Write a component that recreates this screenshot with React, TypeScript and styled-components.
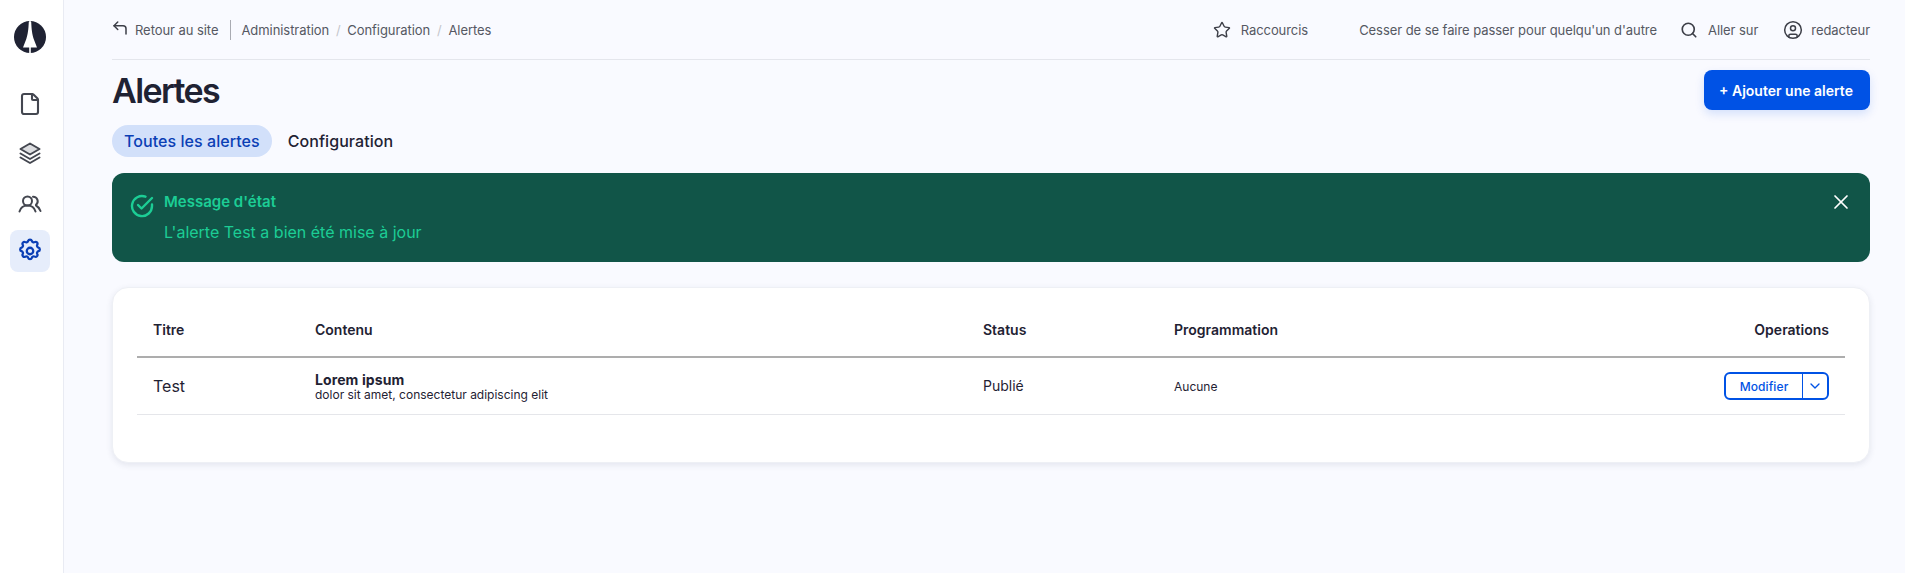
import React from 'react'
import styled, { createGlobalStyle } from 'styled-components'
import { ChevronDown, CornerUpLeft, File, Search, Star, UserCircle, X } from 'lucide-react'

const GlobalStyle = createGlobalStyle`
  html, body {
    margin: 0;
    padding: 0;
    height: 100%;
    background: #f9faff;
  }
  body {
    font-family: Inter, "Liberation Sans", sans-serif;
    color: #1f2233;
  }
  * {
    box-sizing: border-box;
  }
`

const Shell = styled.div`
  display: flex;
  min-height: 573px;
`

const Sidebar = styled.nav`
  width: 64px;
  flex-shrink: 0;
  background: #fff;
  border-right: 1px solid #e9ebf3;
  display: flex;
  flex-direction: column;
  align-items: center;
  gap: 7px;
  padding: 21px 3px 0 0;
`

const Logo = styled.svg`
  width: 32px;
  height: 32px;
  margin-bottom: 23px;
`

const NavItem = styled.a<{ $active?: boolean }>`
  width: 40px;
  height: 42px;
  border-radius: 8px;
  display: flex;
  align-items: center;
  justify-content: center;
  color: ${(p) => (p.$active ? '#0b3fb5' : '#444750')};
  background: ${(p) => (p.$active ? '#e6edfb' : 'transparent')};
`

const Main = styled.main`
  flex: 1;
  min-width: 0;
  padding: 0 35px 0 48px;
`

const TopBar = styled.header`
  height: 60px;
  border-bottom: 1px solid #e4e6ec;
  display: flex;
  align-items: center;
  justify-content: space-between;
  font-size: 13px;
  letter-spacing: -0.06px;
  color: #555862;
`

const Crumbs = styled.div`
  display: flex;
  align-items: center;
`

const BackLink = styled.a`
  display: flex;
  align-items: center;
  gap: 6px;
  padding-right: 12px;
  margin-right: 10px;
  margin-left: -1px;
  height: 20px;
  border-right: 1px solid #a9abb2;
  svg {
    margin-top: -3px;
    color: #3d3f48;
  }
`

const Sep = styled.span`
  color: #c4c6cc;
  margin: 0 6.8px;
`

const TopActions = styled.div`
  display: flex;
  align-items: center;
`

const TopAction = styled.a<{ $gap: number; $iconGap?: number }>`
  display: flex;
  align-items: center;
  gap: ${(p) => p.$iconGap ?? 8}px;
  margin-right: ${(p) => p.$gap}px;
  color: #555862;
  svg {
    color: #3d3f48;
  }
`

const TitleRow = styled.div`
  display: flex;
  align-items: flex-start;
  justify-content: space-between;
  padding-top: 11px;
  height: 65px;
`

const Title = styled.h1`
  margin: 0;
  font-size: 34px;
  line-height: 40px;
  font-weight: 600;
  letter-spacing: -1.6px;
  color: #1f2233;
`

const AddButton = styled.button`
  height: 40px;
  margin-top: -1px;
  width: 166px;
  padding: 0 2px 0 0;
  border: 0;
  border-radius: 8px;
  background: #0052e5;
  color: #fff;
  font-family: inherit;
  font-size: 14px;
  font-weight: 600;
  box-shadow: 0 4px 10px rgba(0, 82, 229, 0.15);
`

const Tabs = styled.div`
  display: flex;
  align-items: center;
  gap: 16px;
  margin-bottom: 16px;
`

const Tab = styled.a<{ $active?: boolean }>`
  height: 32px;
  padding: ${(p) => (p.$active ? '0 12px' : '0')};
  border-radius: 16px;
  display: flex;
  align-items: center;
  font-size: 16px;
  font-weight: 500;
  letter-spacing: 0.06px;
  color: ${(p) => (p.$active ? '#0b3fb5' : '#1f2233')};
  background: ${(p) => (p.$active ? '#d2e0fa' : 'transparent')};
`

const Alert = styled.div`
  height: 89px;
  border-radius: 12px;
  background: #115548;
  color: #1ccd95;
  display: flex;
  padding: 20px 17px 20px 18px;
  gap: 10px;
  margin-bottom: 25px;
`

const AlertIcon = styled.svg`
  margin-top: 1px;
  flex-shrink: 0;
`

const AlertBody = styled.div`
  flex: 1;
`

const AlertTitle = styled.div`
  font-size: 15px;
  line-height: 20px;
  font-weight: 600;
  margin-top: -1px;
  margin-bottom: 10px;
`

const AlertText = styled.div`
  font-size: 16px;
  line-height: 20px;
`

const CloseButton = styled.button`
  border: 0;
  background: none;
  padding: 0;
  height: 24px;
  margin-top: -3px;
  color: #fff;
`

const Card = styled.section`
  background: #fff;
  border: 1px solid #eef0f5;
  border-radius: 16px;
  box-shadow: 0 2px 6px rgba(40, 50, 90, 0.1);
  height: 176px;
  padding: 0 24px;
`

const Table = styled.table`
  width: 100%;
  border-collapse: collapse;
  table-layout: fixed;
`

const HeadCell = styled.th<{ $width?: number; $right?: boolean }>`
  height: 69px;
  padding: 15px 16px 0;
  width: ${(p) => (p.$width ? `${p.$width}px` : 'auto')};
  text-align: ${(p) => (p.$right ? 'right' : 'left')};
  font-size: 14px;
  font-weight: 600;
  color: #1f2233;
  border-bottom: 2px solid #adadad;
`

const Cell = styled.td<{ $size?: number; $right?: boolean; $top?: number }>`
  height: 57px;
  padding: ${(p) => p.$top ?? 1}px 16px 0;
  font-size: ${(p) => p.$size ?? 14}px;
  text-align: ${(p) => (p.$right ? 'right' : 'left')};
  border-bottom: 1px solid #e5e6ea;
`

const ContentTitle = styled.div`
  font-size: 14px;
  line-height: 15px;
  font-weight: 700;
  letter-spacing: 0.1px;
  margin-bottom: 1px;
`

const ContentSub = styled.div`
  font-size: 12px;
  line-height: 14px;
`

const SplitButton = styled.div`
  display: inline-flex;
  height: 28px;
  border: 2px solid #0052e5;
  border-radius: 6px;
  color: #0052e5;
  vertical-align: middle;
`

const SplitMain = styled.span`
  width: 77px;
  display: flex;
  align-items: center;
  justify-content: center;
  font-size: 12px;
  font-weight: 500;
  letter-spacing: 0.1px;
  border-right: 1px solid #0052e5;
`

const SplitCaret = styled.span`
  width: 24px;
  display: flex;
  align-items: center;
  justify-content: center;
`

export default function App() {
  return (
    <>
      <GlobalStyle />
      <Shell>
        <Sidebar>
          <Logo viewBox="0 0 32 32">
            <circle cx="16" cy="16" r="16" fill="#1f2233" />
            <path d="M15.200 0h1.600v32h-1.600z" fill="#fff" />
            <path d="M14.800 1h2.400c.4 8 1 12.500 2.500 17l3.300 8.500H9l3.300-8.500c1.500-4.500 2.100-9 2.500-17z" fill="#fff" />
          </Logo>
          <NavItem>
            <File size={24} strokeWidth={2.1} />
          </NavItem>
          <NavItem>
            <svg width="24" height="24" viewBox="0 0 24 24" fill="none" stroke="currentColor" strokeWidth="2" strokeLinejoin="round" strokeLinecap="round">
              <path d="M12 2.500l9.500 5.500L12 13.500 2.500 8z" fill="#dcdde0" />
              <path d="M2.500 12.500L12 18l9.500-5.500" />
              <path d="M2.500 16.500L12 22l9.500-5.500" />
            </svg>
          </NavItem>
          <NavItem>
            <svg width="24" height="24" viewBox="0 0 24 24" fill="none" stroke="currentColor" strokeWidth="2" strokeLinecap="round" strokeLinejoin="round">
              <circle cx="9.500" cy="11" r="4.500" />
              <path d="M1.500 21.500c1-3.500 4-6 8-6s7 2.500 8 6" />
              <path d="M15 6.800a4.500 4.500 0 0 1 3 8" />
              <path d="M18 15.500c2 1 3.500 3 4.500 5.500" />
            </svg>
          </NavItem>
          <NavItem $active>
            <svg width="26" height="26" viewBox="0 0 24 24" fill="none" stroke="currentColor" strokeWidth="2.100" strokeLinejoin="round">
              <path d="M10.300 2.700c.4-1.700 3-1.700 3.400 0a1.800 1.800 0 0 0 2.600 1.100c1.500-.9 3.300.8 2.400 2.400a1.800 1.800 0 0 0 1.100 2.600c1.700.4 1.700 3 0 3.400a1.800 1.800 0 0 0-1.100 2.600c.9 1.500-.8 3.300-2.400 2.400a1.800 1.800 0 0 0-2.600 1.100c-.4 1.700-3 1.700-3.400 0a1.800 1.800 0 0 0-2.600-1.100c-1.500.9-3.300-.8-2.400-2.400a1.800 1.800 0 0 0-1.100-2.600c-1.700-.4-1.700-3 0-3.400a1.800 1.800 0 0 0 1.100-2.600c-.9-1.500.8-3.300 2.400-2.400a1.800 1.800 0 0 0 2.600-1.100z" />
              <circle cx="12" cy="12" r="3" />
            </svg>
          </NavItem>
        </Sidebar>
        <Main>
          <TopBar>
            <Crumbs>
              <BackLink>
                <CornerUpLeft size={18} strokeWidth={2} />
                Retour au site
              </BackLink>
              Administration
              <Sep>/</Sep>
              Configuration
              <Sep>/</Sep>
              Alertes
            </Crumbs>
            <TopActions>
              <TopAction $gap={51} $iconGap={10}>
                <Star size={18} strokeWidth={1.9} />
                Raccourcis
              </TopAction>
              <TopAction $gap={23}>Cesser de se faire passer pour quelqu'un d'autre</TopAction>
              <TopAction $gap={25} $iconGap={10}>
                <Search size={18} strokeWidth={2.2} />
                Aller sur
              </TopAction>
              <TopAction $gap={0}>
                <UserCircle size={20} strokeWidth={1.8} />
                redacteur
              </TopAction>
            </TopActions>
          </TopBar>
          <TitleRow>
            <Title>Alertes</Title>
            <AddButton>+ Ajouter une alerte</AddButton>
          </TitleRow>
          <Tabs>
            <Tab $active>Toutes les alertes</Tab>
            <Tab>Configuration</Tab>
          </Tabs>
          <Alert>
            <AlertIcon width="24" height="24" viewBox="0 0 24 24" fill="none" stroke="currentColor" strokeWidth="2.400" strokeLinecap="round" strokeLinejoin="round">
              <path d="M22 10.500V12A10 10 0 1 1 15.500 2.700" />
              <path d="M8 11l3.500 3.500L22 4" />
            </AlertIcon>
            <AlertBody>
              <AlertTitle>Message d'état</AlertTitle>
              <AlertText>L'alerte Test a bien été mise à jour</AlertText>
            </AlertBody>
            <CloseButton>
              <X size={24} strokeWidth={1.7} />
            </CloseButton>
          </Alert>
          <Card>
            <Table>
              <thead>
                <tr>
                  <HeadCell $width={162}>Titre</HeadCell>
                  <HeadCell $width={668}>Contenu</HeadCell>
                  <HeadCell $width={191}>Status</HeadCell>
                  <HeadCell $width={300}>Programmation</HeadCell>
                  <HeadCell $right>Operations</HeadCell>
                </tr>
              </thead>
              <tbody>
                <tr>
                  <Cell $size={16}>Test</Cell>
                  <Cell $top={2}>
                    <ContentTitle>Lorem ipsum</ContentTitle>
                    <ContentSub>dolor sit amet, consectetur adipiscing elit</ContentSub>
                  </Cell>
                  <Cell $top={0}>Publié</Cell>
                  <Cell $size={12}>Aucune</Cell>
                  <Cell $right>
                    <SplitButton>
                      <SplitMain>Modifier</SplitMain>
                      <SplitCaret>
                        <ChevronDown size={16} strokeWidth={2} />
                      </SplitCaret>
                    </SplitButton>
                  </Cell>
                </tr>
              </tbody>
            </Table>
          </Card>
        </Main>
      </Shell>
    </>
  )
}
